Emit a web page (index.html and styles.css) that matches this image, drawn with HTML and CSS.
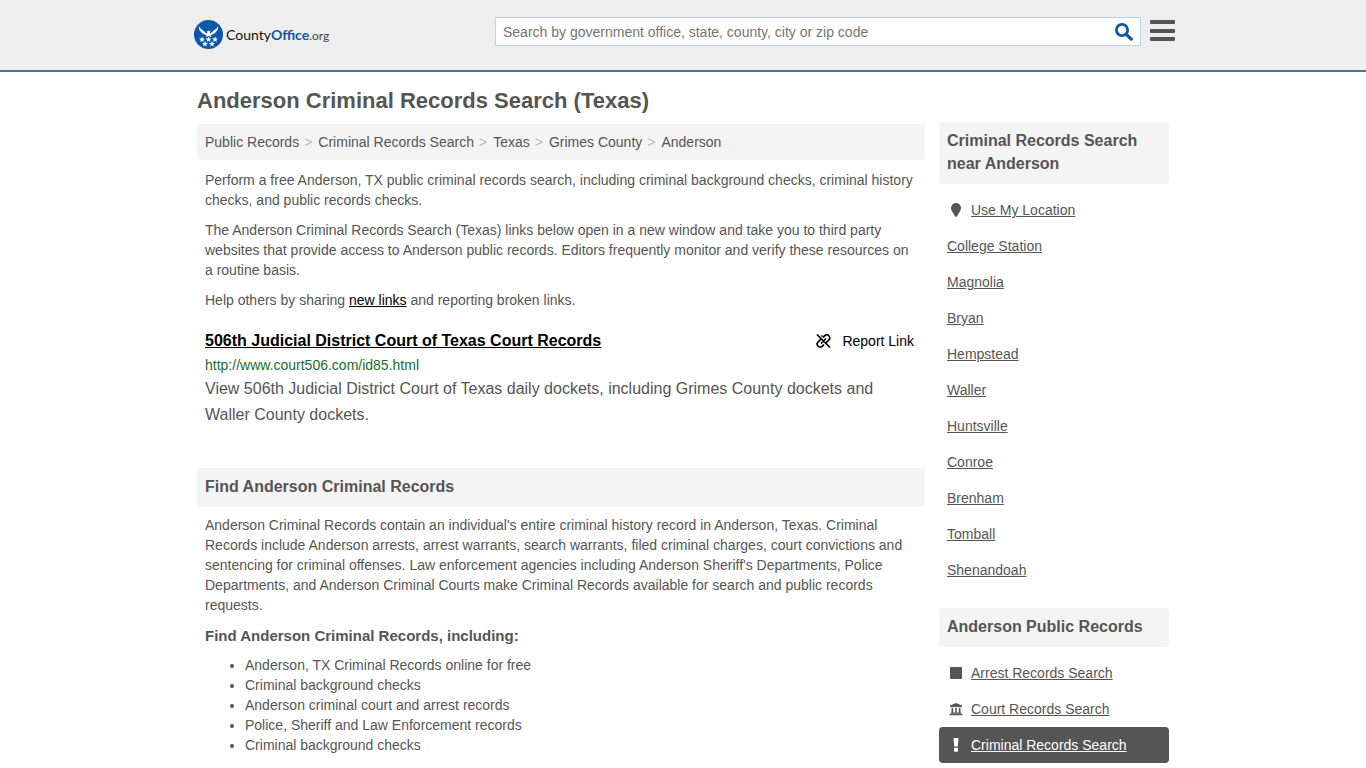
FILE: index.html
```html
<!DOCTYPE html>
<html lang="en">
<head>
<meta charset="utf-8">
<meta name="viewport" content="width=device-width, initial-scale=1">
<title>Anderson Criminal Records Search (Texas)</title>
<link rel="stylesheet" href="styles.css">
</head>
<body>
<header class="site-header">
  <div class="header-inner">
    <a class="logo" href="#">
      <svg class="logo-mark" viewBox="0 0 58 58" aria-hidden="true">
        <circle cx="29" cy="29" r="29" fill="#0b57a8"/>
        <path fill="#fff" d="M10 13 C13 19 19 20 24 26 L27 27 L26 23 L29 21 L33 23 L31 27 L34 26 C39 20 45 19 48 13 C49 18 47 21 44 23 L45 24 L41 26 L40 28 L36 29 L33 31 L35 34 L29 32 L23 34 L25 31 L22 29 L18 28 L17 26 L13 24 L14 23 C11 21 9 18 10 13Z"/>
        <defs><path id="star" fill="#fff" d="M0-6 L1.600-1.900 6-1.800 2.600.9 3.700 5 0 2.600 -3.700 5 -2.600.9 -6-1.800 -1.600-1.900Z"/></defs>
        <use href="#star" x="16" y="39"/><use href="#star" x="29" y="39"/><use href="#star" x="42" y="39"/>
        <use href="#star" x="22" y="48"/><use href="#star" x="36" y="48"/>
      </svg>
      <span class="logo-text">County<b>Office</b><span class="logo-tld">.org</span></span>
    </a>
    <form class="search" role="search">
      <input class="search-input" type="text" aria-label="Search" placeholder="Search by government office, state, county, city or zip code">
      <button class="search-button" type="button" aria-label="Search">
        <svg width="18" height="18" viewBox="0 0 18 18" aria-hidden="true"><circle cx="7" cy="7" r="5.600" fill="none" stroke="#0b57a8" stroke-width="2.800"/><path d="M11.300 11.300 16.200 16.200" stroke="#0b57a8" stroke-width="3.200" stroke-linecap="round"/></svg>
      </button>
    </form>
    <button class="menu-button" type="button" aria-label="Menu">
      <svg width="25" height="22" viewBox="0 0 25 22" aria-hidden="true"><g fill="#555"><rect width="25" height="4" rx="1"/><rect y="9" width="25" height="4" rx="1"/><rect y="17" width="25" height="4" rx="1"/></g></svg>
    </button>
  </div>
</header>
<div class="page">
  <main class="main">
    <h1 class="title">Anderson Criminal Records Search (Texas)</h1>
    <nav class="crumbs" aria-label="Breadcrumb">
      <a href="#">Public Records</a><span class="sep">&gt;</span><a href="#">Criminal Records Search</a><span class="sep">&gt;</span><a href="#">Texas</a><span class="sep">&gt;</span><a href="#">Grimes County</a><span class="sep">&gt;</span><a href="#">Anderson</a>
    </nav>
    <div class="copy">
      <p>Perform a free Anderson, TX public criminal records search, including criminal background checks, criminal history checks, and public records checks.</p>
      <p>The Anderson Criminal Records Search (Texas) links below open in a new window and take you to third party websites that provide access to Anderson public records. Editors frequently monitor and verify these resources on a routine basis.</p>
      <p>Help others by sharing <a class="dark-link" href="#">new links</a> and reporting broken links.</p>
    </div>
    <article class="record">
      <div class="record-head">
        <a class="record-title" href="#">506th Judicial District Court of Texas Court Records</a>
        <a class="report" href="#">
          <svg width="16" height="16" viewBox="0 0 16 16" aria-hidden="true" fill="none" stroke="#000" stroke-width="1.700"><path d="M2 1.500 15 14.500M6.500 3.500 7.500 2.500M6 10.500 11 5.500M8 4.500 9.600 2.800A2.900 2.900 0 0 1 13.900 7L11.300 9.600M9 11.500 7.400 13.200A2.900 2.900 0 0 1 3.100 9L5.700 6.400"/></svg>
          <span>Report Link</span>
        </a>
      </div>
      <div class="record-url">http://www.court506.com/id85.html</div>
      <p class="record-text">View 506th Judicial District Court of Texas daily dockets, including Grimes County dockets and Waller County dockets.</p>
    </article>
    <section>
      <h2 class="bar">Find Anderson Criminal Records</h2>
      <div class="copy copy-section">
        <p>Anderson Criminal Records contain an individual's entire criminal history record in Anderson, Texas. Criminal Records include Anderson arrests, arrest warrants, search warrants, filed criminal charges, court convictions and sentencing for criminal offenses. Law enforcement agencies including Anderson Sheriff's Departments, Police Departments, and Anderson Criminal Courts make Criminal Records available for search and public records requests.</p>
        <h3 class="subhead">Find Anderson Criminal Records, including:</h3>
        <ul class="bullets">
          <li>Anderson, TX Criminal Records online for free</li>
          <li>Criminal background checks</li>
          <li>Anderson criminal court and arrest records</li>
          <li>Police, Sheriff and Law Enforcement records</li>
          <li>Criminal background checks</li>
        </ul>
      </div>
    </section>
  </main>
  <aside class="side">
    <section>
      <h2 class="bar">Criminal Records Search near Anderson</h2>
      <ul class="links">
        <li><a href="#"><svg class="icon" viewBox="0 0 16 16" aria-hidden="true"><path d="M8 1A5 5 0 0 1 13 6C13 9 10.500 11 9 14.300Q8 15.700 7 14.300C5.500 11 3 9 3 6A5 5 0 0 1 8 1Z"/></svg><span>Use My Location</span></a></li>
        <li><a href="#"><span>College Station</span></a></li>
        <li><a href="#"><span>Magnolia</span></a></li>
        <li><a href="#"><span>Bryan</span></a></li>
        <li><a href="#"><span>Hempstead</span></a></li>
        <li><a href="#"><span>Waller</span></a></li>
        <li><a href="#"><span>Huntsville</span></a></li>
        <li><a href="#"><span>Conroe</span></a></li>
        <li><a href="#"><span>Brenham</span></a></li>
        <li><a href="#"><span>Tomball</span></a></li>
        <li><a href="#"><span>Shenandoah</span></a></li>
      </ul>
    </section>
    <section>
      <h2 class="bar">Anderson Public Records</h2>
      <ul class="links">
        <li><a href="#"><svg class="icon" viewBox="0 0 16 16" aria-hidden="true"><rect x="2" y="2" width="12" height="12" rx="1"/></svg><span>Arrest Records Search</span></a></li>
        <li><a href="#"><svg class="icon" viewBox="0 0 16 16" aria-hidden="true"><path d="M8 2 14 4.500V6H2V4.500ZM3.500 6.700H5.200V11.500H7.200V6.700H8.800V11.500H10.800V6.700H12.500V11.500H13.300V12.700H2.700V11.500H3.500ZM1.500 13H14.500V14.200H1.500Z"/></svg><span>Court Records Search</span></a></li>
        <li><a class="active" href="#" aria-current="page"><svg class="icon" viewBox="0 0 16 16" aria-hidden="true"><path d="M5.500 2Q5.500 1 6.500 1H9.500Q10.500 1 10.500 2L9.700 9.500H6.300ZM6 10.700H10V13.900Q10 14.700 9.200 14.700H6.800Q6 14.700 6 13.900Z"/></svg><span>Criminal Records Search</span></a></li>
      </ul>
    </section>
  </aside>
</div>
</body>
</html>
```

FILE: styles.css
```css
* { box-sizing: border-box; }
body, h1, h2, h3, p, ul { margin: 0; padding: 0; }
body {
  background: #fff;
  color: #555;
  font: 14px/20px "Liberation Sans", Arial, sans-serif;
}
a { color: inherit; text-decoration: none; }
ul { list-style: none; }
button { border: 0; padding: 0; background: none; cursor: pointer; }
svg { display: block; flex: none; }

.site-header {
  background: #eee;
  border-bottom: 2px solid #337ab7;
}
.header-inner {
  display: flex;
  align-items: flex-start;
  max-width: 984px;
  min-height: 70px;
  margin: 0 auto;
  padding-top: 17px;
}
.logo {
  display: flex;
  align-items: center;
  gap: 3px;
  padding: 3px 0 0 3px;
  width: 304px;
}
.logo-mark { width: 29px; height: 29px; }
.logo-text { padding-top: 2px; color: #111; font: 14px/20px Lato, sans-serif; }
.logo-text b { color: #0b57a8; }
.logo-tld { color: #444; font-size: 12px; }
.search {
  display: flex;
  flex: 1;
  height: 29px;
  background: #fff;
  border: 1px solid #bcd4e6;
}
.search-input {
  flex: 1;
  min-width: 0;
  border: 0;
  padding: 0 7px;
  background: none;
  color: #555;
  font: inherit;
}
.search-input::placeholder { color: #757575; opacity: 1; }
.search-button { display: flex; align-items: center; padding: 0 7px; }
.menu-button { padding: 3px 0 0; margin-left: 9px; }

.page {
  display: flex;
  gap: 14px;
  max-width: 972px;
  margin: 0 auto;
}
.main { flex: 1; min-width: 0; padding-top: 17px; }
.side { width: 230px; padding-top: 50px; }

.title { font-size: 22px; line-height: 24px; margin-bottom: 11px; }
.crumbs {
  padding: 8px;
  background: #f4f4f4;
  border-radius: 4px;
}
.sep { color: #bbb; padding: 0 6px 0 5px; }
.copy { padding: 10px 8px 0; }
.copy p { margin-bottom: 10px; }
.dark-link { color: #000; text-decoration: underline; }

.record { padding: 8px 8px 0; margin-bottom: 40px; }
.record-head {
  display: flex;
  justify-content: space-between;
  align-items: center;
  margin-bottom: 2px;
  padding-right: 3px;
}
.record-title {
  color: #000;
  font-size: 16px;
  line-height: 25px;
  font-weight: bold;
  text-decoration: underline;
}
.report { display: flex; align-items: center; gap: 11px; color: #000; }
.record-url { margin-bottom: 1px; color: #1a6b2f; }
.record-text { font-size: 16px; line-height: 26px; }

.bar {
  padding: 7px 8px 9px;
  background: #f4f4f4;
  border-radius: 4px;
  font-size: 16px;
  line-height: 23px;
}
.copy-section { padding-top: 8px; }
.subhead { font-size: 15px; line-height: 22px; margin-bottom: 8px; }
.bullets { list-style: disc; padding-left: 40px; }

.links { padding: 8px 0 20px; }
.side section:last-child .links { padding-bottom: 0; }
.links a {
  display: flex;
  align-items: center;
  gap: 7px;
  padding: 8px;
  border-radius: 4px;
}
.links span { text-decoration: underline; }
.icon { width: 16px; height: 16px; margin-left: 1px; fill: #555; }
.links .active { background: #555; color: #fff; }
.active .icon { fill: #fff; }
```
